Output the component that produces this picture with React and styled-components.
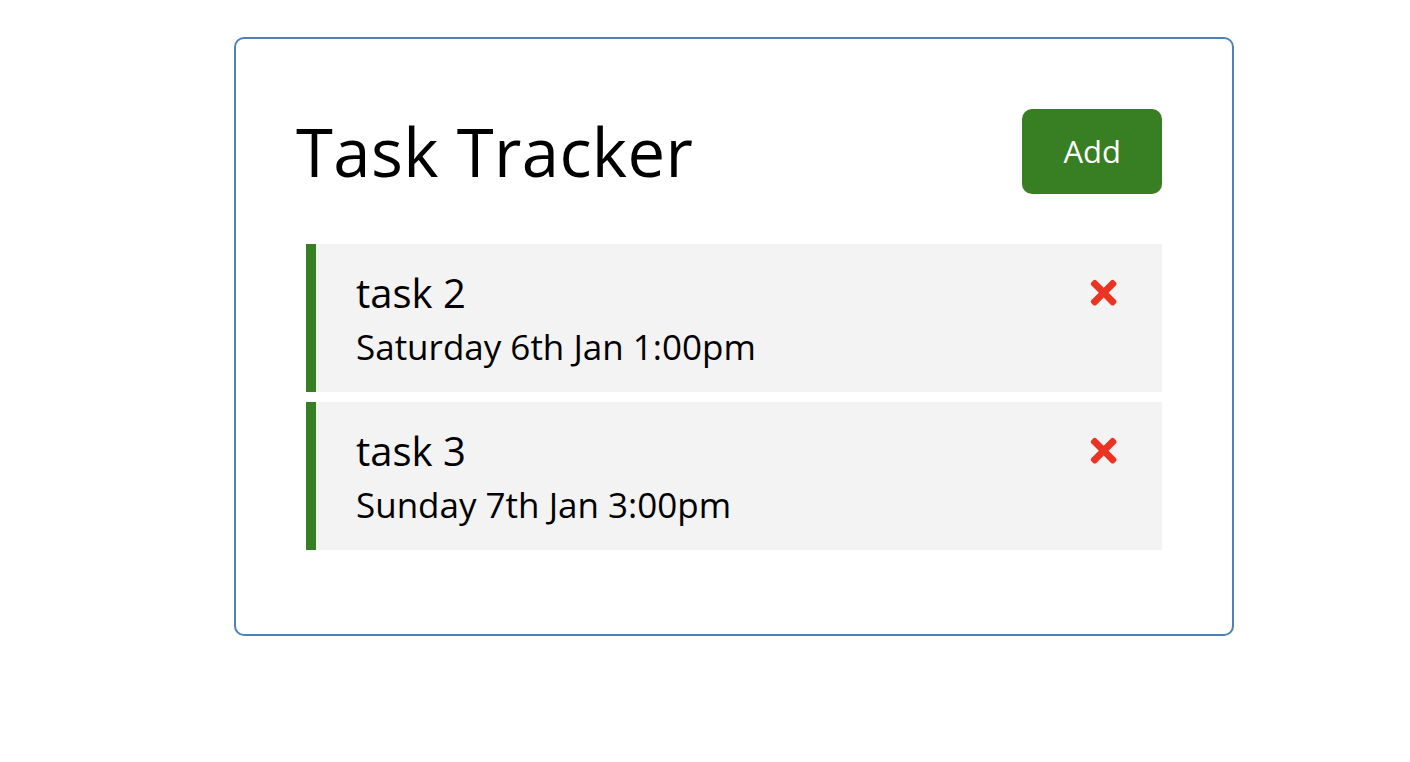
import React, { useState } from 'react';
import styled, { createGlobalStyle } from 'styled-components';
import { FaTimes } from 'react-icons/fa';

const GlobalStyle = createGlobalStyle`
  * {
    box-sizing: border-box;
    margin: 0;
    padding: 0;
  }
  body {
    font-family: 'Open Sans', 'Liberation Sans', sans-serif;
    background: #fff;
  }
`;

const Container = styled.div`
  width: 1000px;
  margin: 37px 0 0 234px;
  border: 2px solid #4f81b4;
  border-radius: 10px;
  padding: 60px;
  min-height: 599px;
`;

const Header = styled.header`
  display: flex;
  justify-content: space-between;
  align-items: center;
  margin-bottom: 40px;
`;

const Title = styled.h1`
  font-size: 67px;
  font-weight: 400;
  letter-spacing: 0.4px;
  color: #000;
  line-height: 1.5;
`;

const Button = styled.button`
  display: inline-block;
  background: ${(p) => p.color};
  color: #fff;
  border: none;
  padding: 20px 41px;
  margin: 10px;
  border-radius: 10px;
  cursor: pointer;
  font-family: inherit;
  font-size: 31px;
  line-height: 45px;
`;

const TaskItem = styled.div`
  background: #f3f3f3;
  margin: 10px;
  padding: 20px 40px;
  border-left: 10px solid ${(p) => (p.reminder ? '#387e22' : 'transparent')};
  cursor: pointer;
`;

const TaskTitle = styled.h3`
  display: flex;
  align-items: center;
  justify-content: space-between;
  font-size: 40px;
  font-weight: 500;
  line-height: 58px;
  color: #000;

  svg {
    font-size: 37.4px;
    color: #eb3323;
    cursor: pointer;
  }
`;

const TaskDay = styled.p`
  font-size: 35px;
  line-height: 50px;
  color: #000;
`;

const initialTasks = [
  { id: 2, text: 'task 2', day: 'Saturday 6th Jan 1:00pm', reminder: true },
  { id: 3, text: 'task 3', day: 'Sunday 7th Jan 3:00pm', reminder: true },
];

const App = () => {
  const [tasks, setTasks] = useState(initialTasks);

  const deleteTask = (id) => setTasks(tasks.filter((t) => t.id !== id));

  return (
    <>
      <GlobalStyle />
      <Container>
        <Header>
          <Title>Task Tracker</Title>
          <Button color="#387e22">Add</Button>
        </Header>
        <div>
          {tasks.map((task) => (
            <TaskItem key={task.id} reminder={task.reminder}>
              <TaskTitle>
                {task.text}
                <FaTimes onClick={() => deleteTask(task.id)} />
              </TaskTitle>
              <TaskDay>{task.day}</TaskDay>
            </TaskItem>
          ))}
        </div>
      </Container>
    </>
  );
};

export default App;
